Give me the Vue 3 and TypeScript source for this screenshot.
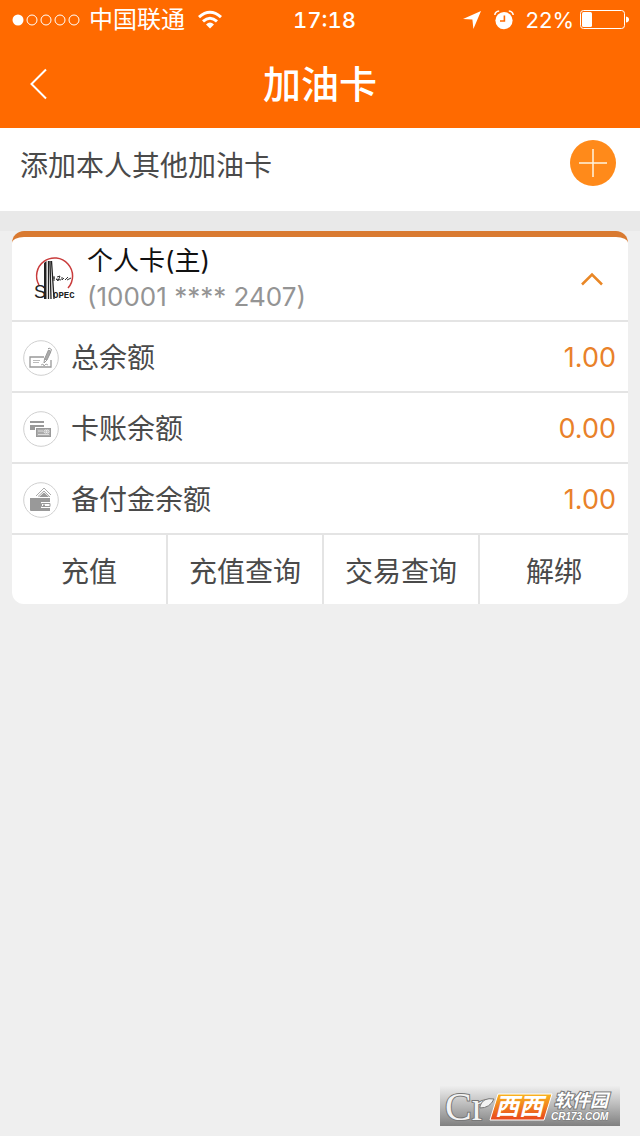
<script setup lang="ts">
import { ref } from 'vue'

interface Balance {
  icon: 'cheque' | 'cards' | 'wallet'
  label: string
  value: string
}

const expanded = ref(true)

const balances: Balance[] = [
  { icon: 'cheque', label: '总余额', value: '1.00' },
  { icon: 'cards', label: '卡账余额', value: '0.00' },
  { icon: 'wallet', label: '备付金余额', value: '1.00' },
]

const actions: string[] = ['充值', '充值查询', '交易查询', '解绑']
</script>

<template>
  <div class="page">
    <header class="top">
      <div class="status">
        <div class="status-side">
          <svg class="signal" width="68" height="12" viewBox="0 0 68 12" aria-hidden="true">
            <circle cx="6" cy="6" r="5.5" fill="#fff" />
            <g fill="none" stroke="#fff" stroke-width="1">
              <circle cx="20" cy="6" r="5" />
              <circle cx="34" cy="6" r="5" />
              <circle cx="48" cy="6" r="5" />
              <circle cx="62" cy="6" r="5" />
            </g>
          </svg>
          <span class="carrier">中国联通</span>
          <svg class="wifi" width="26" height="20" viewBox="0 0 26 20" aria-hidden="true">
            <g fill="none" stroke="#fff" stroke-width="3">
              <path d="M2 7.2Q13-2.6 24 7.2" />
              <path d="M6 11.4Q13 5.2 20 11.4" />
            </g>
            <path d="M9 14.4Q13 10.8 17 14.4L13 18.6Z" fill="#fff" />
          </svg>
        </div>
        <time class="clock">17:18</time>
        <div class="status-side end">
          <svg width="18" height="18" viewBox="0 0 18 18" aria-hidden="true">
            <path d="M18 0L10.4 18L9.4 8.6L0 8Z" fill="#fff" />
          </svg>
          <svg class="alarm" width="20" height="20" viewBox="0 0 20 20" aria-hidden="true">
            <circle cx="10" cy="10.6" r="8.6" fill="#fff" />
            <path d="M10.4 5.5V11H6" fill="none" stroke="#ff6a00" stroke-width="1.6" />
            <path d="M.8 5Q1.2 1.4 5.2 1M19.2 5Q18.8 1.4 14.8 1" fill="none" stroke="#fff" stroke-width="1.5" />
          </svg>
          <span class="percent">22%</span>
          <svg class="battery" width="49" height="20" viewBox="0 0 49 20" aria-hidden="true">
            <rect x=".5" y=".5" width="44" height="18" rx="3" fill="none" stroke="#fff" />
            <rect x="2" y="2" width="10" height="15" rx="1.5" fill="#fff" />
            <path d="M46 6.5Q49 7 49 9.5T46 12.5Z" fill="#fff" />
          </svg>
        </div>
      </div>
      <div class="nav">
        <button class="back" type="button" aria-label="返回">
          <svg width="18" height="32" viewBox="0 0 18 32" aria-hidden="true">
            <path d="M16 1.5L1.5 16L16 30.5" fill="none" stroke="#fff" stroke-width="2" />
          </svg>
        </button>
        <h1>加油卡</h1>
      </div>
    </header>

    <section class="add">
      <span>添加本人其他加油卡</span>
      <button type="button" class="plus" aria-label="添加加油卡">
        <svg width="46" height="46" viewBox="0 0 46 46" aria-hidden="true">
          <circle cx="23" cy="23" r="23" fill="#ff8a1a" />
          <path d="M23 9V37M9 23H37" stroke="#fff5e0" stroke-width="1.5" />
        </svg>
      </button>
    </section>

    <main>
      <article class="card">
        <button class="card-head" type="button" :aria-expanded="expanded" @click="expanded = !expanded">
          <svg class="logo" width="40" height="42" viewBox="0 0 40 42" aria-hidden="true">
            <path d="M5 27A18 18 0 1 1 34 30" fill="none" stroke="#c93c3c" stroke-width="1.5" />
            <path d="M10 5L12.5 3V41H10Z" fill="#222" />
            <path d="M14.5 3V41M16 3L17 41M17.5 3L20 41" fill="none" stroke="#222" stroke-width="1.3" />
            <path d="M18 20H21M20 18V23M23 19L26 18L24 23L22 21L27 22M28 19V22L30 20M31 22L34 19M33 22L37 20" fill="none" stroke="#333" stroke-width="1" />
            <text class="logo-initial" x="0" y="40">S</text>
            <text class="logo-word" x="19" y="40">OPEC</text>
          </svg>
          <span class="card-id">
            <span class="card-name">个人卡(主)</span>
            <span class="card-number">(10001 **** 2407)</span>
          </span>
          <svg class="chevron" :class="{ closed: !expanded }" width="22" height="14" viewBox="0 0 22 14" aria-hidden="true">
            <path d="M1 12.5L11 2.5L21 12.5" fill="none" stroke="#e98726" stroke-width="2.5" />
          </svg>
        </button>

        <dl v-if="expanded">
          <div v-for="b in balances" :key="b.label" class="row">
            <dt>
              <svg width="36" height="36" viewBox="0 0 36 36" aria-hidden="true">
                <circle cx="18" cy="18" r="17.3" fill="#fff" stroke="#d0d0d0" stroke-width="1" />
                <g v-if="b.icon === 'cheque'" fill="none" stroke="#999">
                  <path d="M21 17H7V27H28V20" stroke-width="1.3" />
                  <path d="M10 20.5H17M10 22.5H16" stroke="#bbb" />
                  <path d="M18 25L20 24L21 26L23 24L25 25" stroke="#aaa" />
                  <path d="M25.5 10L28 11.5L24 20L21.5 19Z" fill="#aaa" />
                  <path d="M21.5 19L21 23L24 20M25 9L26 8L28.5 9.5L28 11" />
                </g>
                <g v-else-if="b.icon === 'cards'">
                  <path d="M7 10H21V12H7ZM7 14H21V16H12V19H7Z" fill="#999" />
                  <rect x="13.5" y="17.5" width="14" height="8" fill="#aaa" stroke="#999" />
                  <path d="M15 20H20M15 23.5H26" stroke="#ddd" />
                  <circle cx="22.5" cy="20.5" r="1.5" fill="none" stroke="#eee" />
                  <circle cx="24.5" cy="20.5" r="1.5" fill="none" stroke="#eee" />
                </g>
                <g v-else>
                  <path d="M13 14L21 6L28 13M15 14.5L21 9L27 15" fill="none" stroke="#aaa" />
                  <path d="M16 15L21 10.5L26 15Z" fill="#999" />
                  <path d="M7 16H27V20H18V26H27V29H8Q7 29 7 28Z" fill="#999" />
                  <path d="M18.5 21.5H27V24.5H18.5Z" fill="#fff" stroke="#999" />
                  <path d="M21 22.5V24" stroke="#999" stroke-width="2" />
                </g>
              </svg>
              <span>{{ b.label }}</span>
            </dt>
            <dd>{{ b.value }}</dd>
          </div>
        </dl>

        <div class="actions">
          <button v-for="a in actions" :key="a" type="button">{{ a }}</button>
        </div>
      </article>
    </main>

    <footer class="mark">
      <svg width="180" height="40" viewBox="0 0 180 40" role="img" aria-label="西西软件园 CR173.COM">
        <defs>
          <linearGradient id="plate" x1="0" y1="0" x2="0" y2="1">
            <stop offset="0" stop-color="#eeeeee" />
            <stop offset=".5" stop-color="#b8b8b8" />
            <stop offset="1" stop-color="#808080" />
          </linearGradient>
          <linearGradient id="flame" x1="0" y1="0" x2="0" y2="1">
            <stop offset="0" stop-color="#f9b51f" />
            <stop offset="1" stop-color="#e8451c" />
          </linearGradient>
        </defs>
        <rect width="180" height="40" fill="url(#plate)" />
        <text class="mark-cr" x="5" y="34">Cr</text>
        <path d="M40 20Q43 11 54 13Q50 22 40 22Z" fill="#f3f3f3" stroke="#777" stroke-width="1" />
        <path d="M58 8H112L104 34H50Z" fill="url(#flame)" stroke="#fff" stroke-width="1" />
        <text class="mark-xi" x="55" y="29">西西</text>
        <text class="mark-name" x="114" y="21">软件园</text>
        <text class="mark-site" x="111" y="34">CR173.COM</text>
      </svg>
    </footer>
  </div>
</template>

<style>
body {
  margin: 0;
  background: #efefef;
}
</style>

<style scoped>
.page {
  display: flex;
  flex-direction: column;
  min-height: 100vh;
  background: #efefef;
  color: #4a4a4a;
  font-family: Inter, "Noto Sans CJK SC", sans-serif;
  font-size: 28px;
  line-height: 40px;
}

button {
  margin: 0;
  padding: 0;
  border: 0;
  background: none;
  color: inherit;
  font: inherit;
  cursor: pointer;
}

svg {
  display: block;
  flex: none;
  overflow: visible;
}

.top {
  background: #ff6a00;
  color: #fff;
}

.status {
  display: grid;
  grid-template-columns: 1fr auto 1fr;
  align-items: center;
  height: 40px;
  padding: 0 11px 0 12px;
  font-size: 24px;
}

.status-side {
  display: flex;
  align-items: center;
}

.end {
  justify-content: flex-end;
}

.carrier {
  margin: 0 12px 0 9px;
}

.clock {
  padding-left: 8px;
  font-size: 22px;
  font-weight: 500;
  font-variant-numeric: tabular-nums;
}

.alarm {
  margin: 0 12px 0 13px;
}

.percent {
  font-size: 22px;
}

.battery {
  margin-left: 6px;
}

.nav {
  display: grid;
  grid-template-columns: 80px 1fr 80px;
  align-items: center;
  height: 88px;
}

.back {
  display: flex;
  align-items: center;
  height: 88px;
  padding-left: 30px;
}

h1 {
  margin: 0;
  font-size: 38px;
  font-weight: 500;
  line-height: 56px;
  text-align: center;
}

.add {
  display: flex;
  align-items: flex-end;
  justify-content: space-between;
  padding: 12px 24px 25px 20px;
  border-bottom: 20px solid #e9e9e9;
  background: #fff;
}

main {
  padding: 0 12px;
}

.card {
  overflow: hidden;
  border-top: 6px solid #d97a31;
  border-radius: 12px;
  background: #fff;
}

.card-head {
  display: flex;
  align-items: center;
  width: 100%;
  padding: 6px 25px 5px 22px;
  text-align: left;
}

.card-id {
  display: flex;
  flex: 1;
  flex-direction: column;
  margin-left: 13px;
  font-size: 26px;
  line-height: 36px;
}

.card-name {
  color: #111;
}

.card-number {
  color: #949494;
}

.logo-initial {
  fill: #222;
  font-family: "Liberation Sans", sans-serif;
  font-size: 18px;
}

.logo-word {
  fill: #222;
  font-family: "Liberation Mono", monospace;
  font-size: 9px;
  font-weight: 700;
}

.closed {
  transform: rotate(180deg);
}

dl {
  margin: 0;
}

.row {
  display: flex;
  align-items: center;
  justify-content: space-between;
  height: 67px;
  padding: 2px 12px 0 11px;
  border-top: 2px solid #e4e4e4;
}

dt {
  display: flex;
  align-items: center;
  gap: 12px;
}

dd {
  margin: 0;
  color: #e98129;
  font-size: 27px;
}

.actions {
  display: grid;
  grid-template-columns: 156fr 156fr 156fr 148fr;
  border-top: 2px solid #e4e4e4;
}

.actions button {
  height: 69px;
  padding-top: 4px;
}

.actions button:not(:last-child) {
  border-right: 2px solid #e4e4e4;
}

.mark {
  align-self: flex-end;
  margin: auto 20px 10px;
}

.mark-cr {
  fill: #f3f3f3;
  stroke: #777;
  stroke-width: 2px;
  paint-order: stroke;
  font-family: "Liberation Serif", serif;
  font-size: 40px;
}

.mark-xi {
  fill: #fff;
  font-size: 24px;
  font-style: italic;
  font-weight: 700;
}

.mark-name {
  fill: #fff;
  stroke: #777;
  stroke-width: 2px;
  paint-order: stroke;
  font-size: 18px;
  font-style: italic;
  font-weight: 700;
}

.mark-site {
  fill: #fff;
  stroke: #777;
  stroke-width: 1px;
  paint-order: stroke;
  font-family: "Liberation Sans", sans-serif;
  font-size: 10px;
  font-style: italic;
  font-weight: 700;
}
</style>
